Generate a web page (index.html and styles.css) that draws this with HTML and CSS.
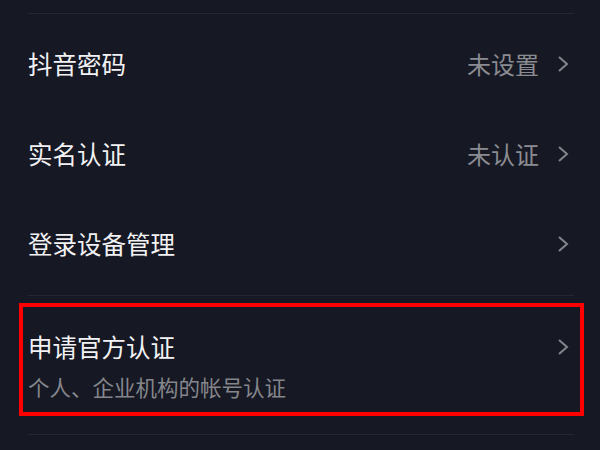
FILE: index.html
```html
<!DOCTYPE html>
<html>
<head lang="zh">
    <meta charset="UTF-8">
    <title>账号与安全</title>
    <link rel="stylesheet" href="styles.css">
</head>
<body>
    <div class="list">
        <div class="line"></div>
        <div class="group">
            <div class="row">
                <span class="title">抖音密码</span>
                <span class="right">
                    <span class="value">未设置</span>
                    <svg class="arrow" viewBox="0 0 12 18"><polyline points="2,2 10,9 2,16"/></svg>
                </span>
            </div>
            <div class="row">
                <span class="title">实名认证</span>
                <span class="right">
                    <span class="value">未认证</span>
                    <svg class="arrow" viewBox="0 0 12 18"><polyline points="2,2 10,9 2,16"/></svg>
                </span>
            </div>
            <div class="row">
                <span class="title">登录设备管理</span>
                <span class="right">
                    <svg class="arrow" viewBox="0 0 12 18"><polyline points="2,2 10,9 2,16"/></svg>
                </span>
            </div>
        </div>
        <div class="line"></div>
        <div class="row-big">
            <div class="head">
                <span class="title">申请官方认证</span>
                <svg class="arrow" viewBox="0 0 12 18"><polyline points="2,2 10,9 2,16"/></svg>
            </div>
            <div class="sub">个人、企业机构的帐号认证</div>
            <div class="mark"></div>
        </div>
        <div class="line"></div>
    </div>
</body>
</html>
```

FILE: styles.css
```css
* {
    margin: 0;
    padding: 0;
}
body {
    background: #161823;
    font-family: "Noto Sans CJK SC", "Noto Sans", sans-serif;
    color: #f2f2f4;
}
.list {
    padding: 13px 26px 0 28px;
}
.line {
    height: 1px;
    background: #252733;
}
.group {
    padding: 5px 0 6px;
}
.row {
    height: 90px;
    display: flex;
    align-items: center;
    justify-content: space-between;
}
.title {
    font-size: 24.5px;
    line-height: 30px;
}
.right {
    display: flex;
    align-items: center;
}
.value {
    font-size: 24px;
    line-height: 30px;
    color: #8b8c92;
    margin-right: 18px;
}
.arrow {
    width: 12px;
    height: 18px;
    margin-right: 5px;
    fill: none;
    stroke: #84858b;
    stroke-width: 2;
}
.row-big {
    position: relative;
    padding: 36px 0 34px;
}
.head {
    display: flex;
    align-items: center;
    justify-content: space-between;
}
.sub {
    margin-top: 12px;
    font-size: 21.5px;
    line-height: 26px;
    color: #85868c;
}
.mark {
    position: absolute;
    top: 7px;
    bottom: 18px;
    left: -9px;
    right: -10px;
    border: 4px solid #ff0000;
}
```
